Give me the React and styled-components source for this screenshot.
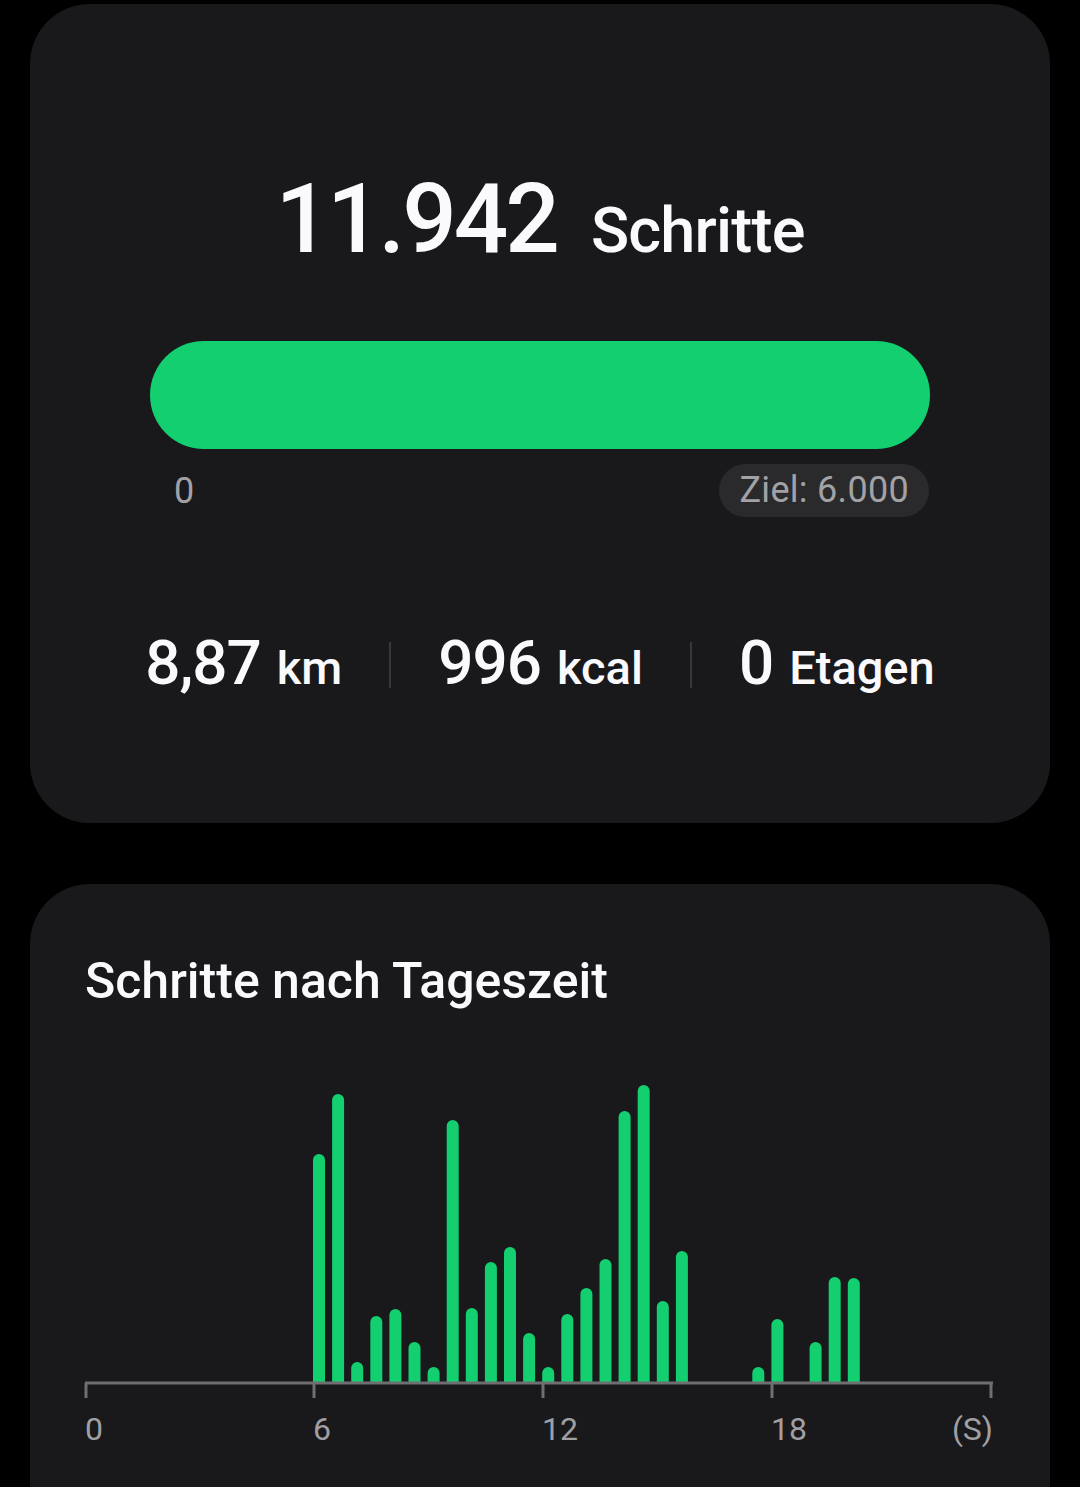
import React from 'react'
import styled, { createGlobalStyle } from 'styled-components'

const GlobalStyle = createGlobalStyle`
  body {
    margin: 0;
    background: #000;
    font-family: Roboto, "Liberation Sans", sans-serif;
    color: #fafafc;
  }
`

// half-hour slot, bar height in px
const bars = [
  [12, 228], [13, 288], [14, 20], [15, 66], [16, 73], [17, 40], [18, 15],
  [19, 262], [20, 74], [21, 120], [22, 135], [23, 49], [24, 15], [25, 68],
  [26, 94], [27, 123], [28, 271], [29, 297], [30, 81], [31, 131],
  [35, 15], [36, 63], [38, 40], [39, 105], [40, 104],
]

const BASE = 323
const ticks = [
  { x: 1, label: '0' },
  { x: 229, label: '6' },
  { x: 458, label: '12' },
  { x: 687, label: '18' },
  { x: 906, label: '(S)', end: true },
]

function barPath(slot, h) {
  const cx = 234 + (slot - 12) * 19.1
  const top = BASE - 1 - h
  const r = 6
  return `M${cx - r},${BASE - 1} V${top + r} A${r} ${r} 0 0 1 ${cx + r},${top + r} V${BASE - 1} Z`
}

function Stat({ value, unit }) {
  return (
    <StatItem>
      <StatValue>{value}</StatValue>
      <StatUnit>{unit}</StatUnit>
    </StatItem>
  )
}

function App() {
  return (
    <Page>
      <GlobalStyle />
      <SummaryCard>
        <Headline>
          <BigNumber>11.942</BigNumber>
          <BigUnit>Schritte</BigUnit>
        </Headline>

        <Progress />

        <ScaleRow>
          <ScaleLabel>0</ScaleLabel>
          <GoalPill>Ziel: 6.000</GoalPill>
        </ScaleRow>

        <Stats>
          <Stat value="8,87" unit="km" />
          <Divider />
          <Stat value="996" unit="kcal" />
          <Divider />
          <Stat value="0" unit="Etagen" />
        </Stats>
      </SummaryCard>

      <ChartCard>
        <Title>Schritte nach Tageszeit</Title>
        <Chart width="910" height="390" viewBox="0 0 910 390">
          {bars.map(([s, h]) => (
            <path key={s} d={barPath(s, h)} fill="#13cf70" />
          ))}
          <line x1="0" y1={BASE} x2="908" y2={BASE} stroke="#6f6f72" strokeWidth="3" />
          {ticks.map(t => (
            <g key={t.label}>
              <line x1={t.x} y1={BASE} x2={t.x} y2={BASE + 15} stroke="#6f6f72" strokeWidth="3" />
              <AxisText x={t.end ? 908 : t.x - 1} y="380" textAnchor={t.end ? 'end' : 'start'}>
                {t.label}
              </AxisText>
            </g>
          ))}
        </Chart>
      </ChartCard>
    </Page>
  )
}

export default App

const Page = styled.div`
  display: flex;
  flex-direction: column;
  gap: 61px;
  padding: 4px 30px 0;
`

const Card = styled.div`
  background: #19191b;
  border-radius: 60px;
`

const SummaryCard = styled(Card)`
  height: 819px;
  box-sizing: border-box;
  padding: 167px 120px 0;
  display: flex;
  flex-direction: column;
`

const Headline = styled.div`
  display: flex;
  justify-content: center;
  align-items: baseline;
  line-height: 96px;
  height: 96px;
`

const BigNumber = styled.span`
  font-size: 96px;
  font-weight: 500;
  letter-spacing: -3px;
`

const BigUnit = styled.span`
  font-size: 63px;
  font-weight: 500;
  letter-spacing: -0.8px;
  margin-left: 34px;
`

const Progress = styled.div`
  margin-top: 74px;
  height: 108px;
  border-radius: 54px;
  background: #13cf70;
`

const ScaleRow = styled.div`
  margin-top: 15px;
  display: flex;
  justify-content: space-between;
  align-items: center;
  height: 53px;
`

const ScaleLabel = styled.span`
  font-size: 36px;
  color: #a2a2a6;
  padding-left: 24px;
`

const GoalPill = styled.span`
  font-size: 36px;
  color: #a2a2a6;
  background: #2a2a2c;
  border-radius: 27px;
  height: 53px;
  line-height: 53px;
  padding: 0 20px 0 20px;
  margin-right: 1px;
  letter-spacing: 0.3px;
`

const Stats = styled.div`
  margin: 117px -20px 0;
  display: flex;
  justify-content: center;
  align-items: center;
  gap: 47px;
  height: 62px;
`

const StatItem = styled.div`
  display: flex;
  flex-shrink: 0;
  align-items: baseline;
  line-height: 62px;
`

const StatValue = styled.span`
  font-size: 62px;
  font-weight: 500;
  letter-spacing: -1px;
`

const StatUnit = styled.span`
  font-size: 47px;
  font-weight: 500;
  margin-left: 16px;
`

const Divider = styled.div`
  flex-shrink: 0;
  width: 2px;
  height: 46px;
  background: #38383a;
`

const ChartCard = styled(Card)`
  min-height: 640px;
  padding: 72px 55px 0;
`

const Title = styled.h2`
  margin: 0;
  font-size: 50px;
  line-height: 50px;
  font-weight: 500;
`

const Chart = styled.svg`
  display: block;
  margin-top: 54px;
  overflow: visible;
`

const AxisText = styled.text`
  font-family: Roboto, "Liberation Sans", sans-serif;
  font-size: 32px;
  fill: #a0a0a4;
`
